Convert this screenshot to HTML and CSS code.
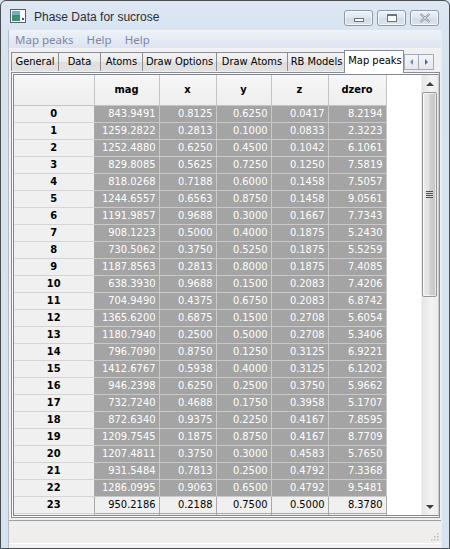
FILE: index.html
```html
<!DOCTYPE html>
<html>
<head>
<meta charset="utf-8">
<link rel="stylesheet" href="styles.css">
</head>
<body>
<div class="window">
  <div class="titlebar">
    <svg class="appicon" width="16" height="14" viewBox="0 0 16 14">
      <rect x="0.5" y="0.5" width="15" height="13" fill="#f4f6f8" stroke="#59606b"/>
      <rect x="2" y="2" width="8" height="10" fill="#3f8f6e"/>
      <rect x="2" y="2" width="8" height="4" fill="#6bb2c4"/>
      <rect x="11" y="2" width="3" height="6" fill="#ffffff"/>
      <rect x="12" y="9" width="2" height="2" fill="#4a4f57"/>
    </svg>
    <span class="title">Phase Data for sucrose</span>
    <div class="wbuttons">
      <div class="wbtn"><span class="g-min"></span></div>
      <div class="wbtn"><span class="g-max"></span></div>
      <div class="wbtn close"><svg width="12" height="10" viewBox="0 0 12 10"><path d="M1.5 1 L10.5 9 M10.5 1 L1.5 9" stroke="#8a8f98" stroke-width="2.2" fill="none"/><path d="M1.5 1 L10.5 9 M10.5 1 L1.5 9" stroke="#eef1f5" stroke-width="0.8" fill="none"/></svg></div>
    </div>
  </div>
  <div class="client">
    <div class="menubar">
      <span class="mi">Map peaks</span>
      <span class="mi">Help</span>
      <span class="mi">Help</span>
    </div>
    <div class="tabs">
      <div class="tab w-general">General</div>
      <div class="tab w-data">Data</div>
      <div class="tab w-atoms">Atoms</div>
      <div class="tab w-dopt">Draw Options</div>
      <div class="tab w-datoms">Draw Atoms</div>
      <div class="tab w-rb">RB Models</div>
      <div class="tab sel w-map">Map peaks</div>
      <div class="tabscroll">
        <div class="tsb"><span class="tri-l"></span></div>
        <div class="tsb"><span class="tri-r"></span></div>
      </div>
    </div>
    <div class="panel">
      <div class="viewport">
        <div class="gridwrap">
          <table class="grid">
            <colgroup>
              <col class="c0"><col class="c1"><col class="c2"><col class="c3"><col class="c4"><col class="c5">
            </colgroup>
            <thead>
              <tr><th></th><th>mag</th><th>x</th><th>y</th><th>z</th><th>dzero</th></tr>
            </thead>
            <tbody>
              <tr><th>0</th><td>843.9491</td><td>0.8125</td><td>0.6250</td><td>0.0417</td><td>8.2194</td></tr>
              <tr><th>1</th><td>1259.2822</td><td>0.2813</td><td>0.1000</td><td>0.0833</td><td>2.3223</td></tr>
              <tr><th>2</th><td>1252.4880</td><td>0.6250</td><td>0.4500</td><td>0.1042</td><td>6.1061</td></tr>
              <tr><th>3</th><td>829.8085</td><td>0.5625</td><td>0.7250</td><td>0.1250</td><td>7.5819</td></tr>
              <tr><th>4</th><td>818.0268</td><td>0.7188</td><td>0.6000</td><td>0.1458</td><td>7.5057</td></tr>
              <tr><th>5</th><td>1244.6557</td><td>0.6563</td><td>0.8750</td><td>0.1458</td><td>9.0561</td></tr>
              <tr><th>6</th><td>1191.9857</td><td>0.9688</td><td>0.3000</td><td>0.1667</td><td>7.7343</td></tr>
              <tr><th>7</th><td>908.1223</td><td>0.5000</td><td>0.4000</td><td>0.1875</td><td>5.2430</td></tr>
              <tr><th>8</th><td>730.5062</td><td>0.3750</td><td>0.5250</td><td>0.1875</td><td>5.5259</td></tr>
              <tr><th>9</th><td>1187.8563</td><td>0.2813</td><td>0.8000</td><td>0.1875</td><td>7.4085</td></tr>
              <tr><th>10</th><td>638.3930</td><td>0.9688</td><td>0.1500</td><td>0.2083</td><td>7.4206</td></tr>
              <tr><th>11</th><td>704.9490</td><td>0.4375</td><td>0.6750</td><td>0.2083</td><td>6.8742</td></tr>
              <tr><th>12</th><td>1365.6200</td><td>0.6875</td><td>0.1500</td><td>0.2708</td><td>5.6054</td></tr>
              <tr><th>13</th><td>1180.7940</td><td>0.2500</td><td>0.5000</td><td>0.2708</td><td>5.3406</td></tr>
              <tr><th>14</th><td>796.7090</td><td>0.8750</td><td>0.1250</td><td>0.3125</td><td>6.9221</td></tr>
              <tr><th>15</th><td>1412.6767</td><td>0.5938</td><td>0.4000</td><td>0.3125</td><td>6.1202</td></tr>
              <tr><th>16</th><td>946.2398</td><td>0.6250</td><td>0.2500</td><td>0.3750</td><td>5.9662</td></tr>
              <tr><th>17</th><td>732.7240</td><td>0.4688</td><td>0.1750</td><td>0.3958</td><td>5.1707</td></tr>
              <tr><th>18</th><td>872.6340</td><td>0.9375</td><td>0.2250</td><td>0.4167</td><td>7.8595</td></tr>
              <tr><th>19</th><td>1209.7545</td><td>0.1875</td><td>0.8750</td><td>0.4167</td><td>8.7709</td></tr>
              <tr><th>20</th><td>1207.4811</td><td>0.3750</td><td>0.3000</td><td>0.4583</td><td>5.7650</td></tr>
              <tr><th>21</th><td>931.5484</td><td>0.7813</td><td>0.2500</td><td>0.4792</td><td>7.3368</td></tr>
              <tr><th>22</th><td>1286.0995</td><td>0.9063</td><td>0.6500</td><td>0.4792</td><td>9.5481</td></tr>
              <tr class="unsel"><th>23</th><td>950.2186</td><td>0.2188</td><td>0.7500</td><td>0.5000</td><td>8.3780</td></tr>
              <tr class="unsel"><th></th><td></td><td></td><td></td><td></td><td></td></tr>
            </tbody>
          </table>
        </div>
        <div class="vscroll">
          <div class="sbtn"><span class="tri-u"></span></div>
          <div class="thumb"><span class="grip"></span></div>
          <div class="track"></div>
          <div class="sbtn"><span class="tri-d"></span></div>
        </div>
      </div>
    </div>
    <div class="status">
      <svg class="gripper" width="8" height="8" viewBox="0 0 8 8">
        <g fill="#b8bcc4">
          <rect x="6" y="0" width="1.5" height="1.5"/>
          <rect x="3" y="3" width="1.5" height="1.5"/><rect x="6" y="3" width="1.5" height="1.5"/>
          <rect x="0" y="6" width="1.5" height="1.5"/><rect x="3" y="6" width="1.5" height="1.5"/><rect x="6" y="6" width="1.5" height="1.5"/>
        </g>
      </svg>
    </div>
  </div>
</div>
</body>
</html>
```

FILE: styles.css
```css
* { box-sizing: border-box; }
html, body { margin: 0; padding: 0; background: #d7e3f1; }
body { width: 450px; height: 549px; overflow: hidden; }

.window {
  width: 450px;
  height: 549px;
  border: 1px solid #4a4d52;
  border-radius: 6px 6px 0 0;
  background: linear-gradient(#dce7f3, #d5e2f0 60px, #d6e3f1);
  display: flex;
  flex-direction: column;
  overflow: hidden;
}

.titlebar {
  height: 29px;
  flex: none;
  display: flex;
  align-items: center;
  padding: 0 10px 0 9px;
  position: relative;
}
.appicon { flex: none; margin-top: 1px; }
.title {
  margin-left: 8px;
  font-family: "Liberation Sans", sans-serif;
  font-size: 12px;
  color: #2a2e33;
  margin-top: 3px;
}
.wbuttons {
  margin-left: auto;
  display: flex;
  gap: 4px;
  align-self: flex-start;
  margin-top: 9px;
}
.wbtn {
  width: 29px;
  height: 16px;
  border: 1px solid #8e99a8;
  border-radius: 3px;
  background: linear-gradient(#eef2f7, #dfe6ef 50%, #d3dce7 51%, #dbe3ec);
  box-shadow: inset 0 0 0 1px rgba(255,255,255,0.7);
  display: flex;
  align-items: center;
  justify-content: center;
}
.g-min {
  width: 10px; height: 4px;
  border: 1px solid #6c737d;
  background: #fbfcfd;
  margin-top: 4px;
}
.g-max {
  width: 10px; height: 8px;
  border: 1px solid #6c737d;
  border-top-width: 2px;
  background: #fbfcfd;
}

.client {
  margin: 0 7px;
  flex: 1;
  display: flex;
  flex-direction: column;
  background: #f0f0f0;
  border-left: 1px solid #b4bcc8;
  border-right: 1px solid #e6ecf3;
}

.menubar {
  height: 19px;
  flex: none;
  display: flex;
  align-items: center;
  padding-left: 0;
  background: linear-gradient(#eef2f8, #e5ebf4 50%, #dde4ef);
  border-bottom: 1px solid #f2f4f8;
}
.mi {
  font-family: "Noto Sans", sans-serif;
  font-size: 11.5px;
  color: #7f86a6;
  padding: 0 7px 0 6px;
  line-height: 17px;
}

.tabs {
  height: 22px;
  flex: none;
  display: flex;
  align-items: flex-end;
  padding-left: 2px;
  margin-top: 1px;
  position: relative;
  z-index: 1;
}
.tab {
  height: 19px;
  margin-bottom: 1px;
  border: 1px solid #8c8e94;
  border-bottom: none;
  margin-right: -1px;
  background: linear-gradient(#f2f2f2, #ebebeb 50%, #dddddd 51%, #e2e2e2);
  font-family: "DejaVu Sans Condensed", "DejaVu Sans", sans-serif;
  font-size: 11px;
  color: #000;
  line-height: 17px;
  text-align: center;
  white-space: nowrap;
}
.w-general { width: 48px; }
.w-data { width: 43px; }
.w-atoms { width: 43px; }
.w-dopt { width: 75px; }
.w-datoms { width: 72px; }
.w-rb { width: 59px; }
.tab.sel {
  width: 60px;
  height: 23px;
  margin-bottom: -1px;
  margin-left: -1px;
  background: #ffffff;
  border-color: #898c95;
  line-height: 19px;
  padding-left: 2px;
}
.tabscroll {
  display: flex;
  margin-left: 1px;
  align-self: center;
  margin-top: 2px;
}
.tsb {
  width: 15px;
  height: 16px;
  border: 1px solid #a6acb5;
  background: linear-gradient(#f4f5f7, #e4e7ec);
  display: flex;
  align-items: center;
  justify-content: center;
}
.tsb + .tsb { margin-left: -1px; width: 16px; }
.tri-l { width: 0; height: 0; border-top: 3px solid transparent; border-bottom: 3px solid transparent; border-right: 3px solid #6f86b3; }
.tri-r { width: 0; height: 0; border-top: 3px solid transparent; border-bottom: 3px solid transparent; border-left: 3px solid #3f63b0; }

.panel {
  height: 446px;
  flex: none;
  margin: 0 1px 0 2px;
  border: 1px solid #898c95;
  background: #ffffff;
  padding: 1px 0 1px 1px;
}
.viewport {
  height: 100%;
  border: 1px solid #828790;
  border-right: 1px solid #c9cdd3;
  display: flex;
  background: #ffffff;
}
.gridwrap {
  flex: 1;
  overflow: hidden;
  background: #ffffff;
}
.grid {
  border-collapse: collapse;
  table-layout: fixed;
  width: 372px;
  font-family: "DejaVu Sans Condensed", "DejaVu Sans", sans-serif;
  font-size: 11px;
}
.c0 { width: 80px; }
.c1 { width: 65px; }
.c2 { width: 57px; }
.c3 { width: 55px; }
.c4 { width: 57px; }
.c5 { width: 58px; }

.grid thead th {
  height: 30px;
  background: linear-gradient(#f6f6f6, #eeeeee);
  border-right: 1px solid #c4c4c4;
  border-bottom: 1px solid #c4c4c4;
  font-weight: bold;
  color: #000;
  text-align: center;
  padding: 0;
}
.grid tbody th {
  height: 17px;
  background: #f0f0f0;
  border-right: 1px solid #a9a9a9;
  border-bottom: 1px solid #d4d4d4;
  font-weight: bold;
  color: #000;
  text-align: center;
  padding: 0;
  line-height: 15px;
}
.grid td {
  height: 17px;
  background: #a4a4a4;
  color: #ffffff;
  text-align: right;
  padding: 0 3px 0 0;
  border-right: 1px solid #c9c9c9;
  border-bottom: 1px solid #c9c9c9;
  line-height: 15px;
  white-space: nowrap;
}
.grid tr.unsel td {
  background: #f0f0f0;
  color: #000;
  border-right-color: #a9a9a9;
  border-bottom-color: #a9a9a9;
}

.vscroll {
  width: 17px;
  flex: none;
  display: flex;
  flex-direction: column;
  background: linear-gradient(90deg, #e6e6e6, #f3f3f3 60%, #ececec);
  border-left: 1px solid #ededed;
}
.sbtn {
  height: 17px;
  flex: none;
  display: flex;
  align-items: center;
  justify-content: center;
}
.tri-u { width: 0; height: 0; border-left: 4px solid transparent; border-right: 4px solid transparent; border-bottom: 4px solid #3e3e3e; }
.tri-d { width: 0; height: 0; border-left: 4px solid transparent; border-right: 4px solid transparent; border-top: 4px solid #3e3e3e; }
.thumb {
  height: 205px;
  flex: none;
  margin: 0 1px 0 0;
  border: 1px solid #969696;
  border-radius: 2px;
  background: linear-gradient(90deg, #ececec, #e1e1e1 45%, #cfcfcf 55%, #c7c7c7);
  box-shadow: inset 0 0 0 1px rgba(255,255,255,0.6);
  display: flex;
  align-items: center;
  justify-content: center;
}
.grip {
  width: 7px;
  height: 7px;
  background: repeating-linear-gradient(#4f4f4f 0 1px, #dcdcdc 1px 2px);
}
.track { flex: 1; }

.status {
  height: 24px;
  flex: none;
  margin-top: 2px;
  border-top: 1px solid #a0a0a0;
  background: #f0eeec;
  position: relative;
  border-bottom: 1px solid #ffffff;
}
.gripper { position: absolute; right: 2px; bottom: 2px; }
```
